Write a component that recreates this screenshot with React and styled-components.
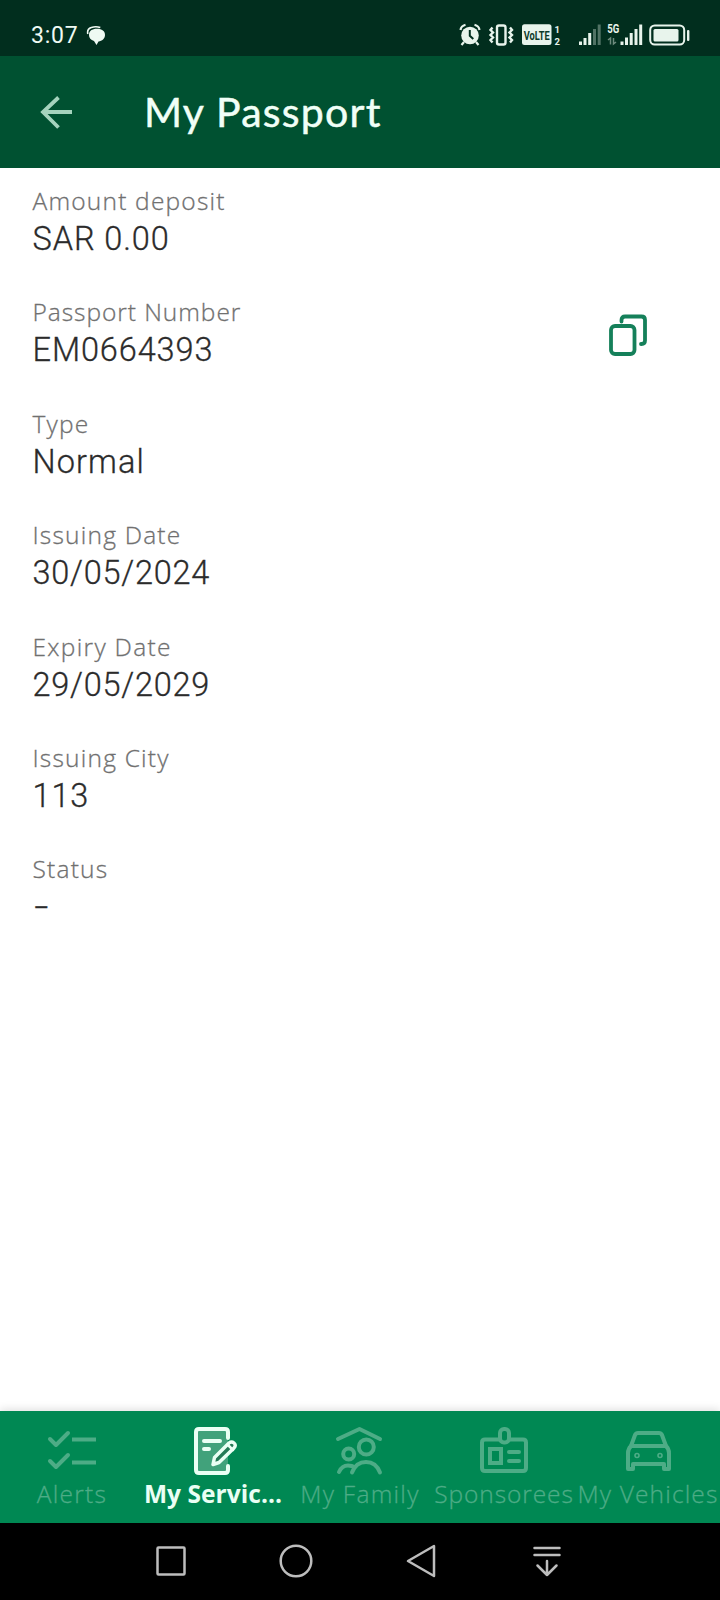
import React from 'react';
import styled, { createGlobalStyle } from 'styled-components';

const Global = createGlobalStyle`
  * { box-sizing: border-box; }
  body { margin: 0; background: #fff; font-family: Lato, 'Liberation Sans', sans-serif; }
`;

const Screen = styled.div`
  display: flex;
  flex-direction: column;
  width: 720px;
  height: 1600px;
  overflow: hidden;
  background: #fff;
`;

const StatusBar = styled.div`
  display: flex;
  align-items: flex-start;
  height: 56px;
  padding: 20px 30px 0 31px;
  background: #012e1e;
  color: #effaf3;
`;

const Clock = styled.span`
  width: 55px;
  padding-top: 2px;
  font: 400 23px/28px Roboto, sans-serif;
  letter-spacing: 0.8px;
`;

const StatusIcons = styled.svg`
  margin-left: auto;
`;

const Header = styled.header`
  display: flex;
  align-items: center;
  height: 112px;
  padding-left: 38px;
  background: #005131;
`;

const Title = styled.h1`
  margin: 0 0 0 68px;
  color: #f1fff7;
  font-size: 41px;
  font-weight: 400;
  line-height: 50px;
  letter-spacing: 1.25px;
  -webkit-text-stroke: 0.5px #f1fff7;
`;

const Details = styled.main`
  flex: 1;
  padding: 16px 32px 0 32.5px;
`;

const Field = styled.div`
  display: flex;
  justify-content: space-between;
  height: 111.4px;
  padding-right: 40px;
`;

const Label = styled.div`
  margin-bottom: 2px;
  color: #707070;
  font: 300 24.5px/33px 'Open Sans', sans-serif;
  letter-spacing: ${(p) => p.$track || 1.2}px;
  -webkit-text-stroke: 0.3px #707070;
`;

const Value = styled.div`
  color: #2b2b2b;
  font: 300 32.5px/40px Roboto, sans-serif;
  letter-spacing: ${(p) => p.$track || 0.9}px;
  -webkit-text-stroke: 0.3px #2b2b2b;
`;

const EmptyValue = styled(Value)`
  padding-left: 1px;
  font-size: 24px;
  font-weight: 400;
  line-height: 42px;
`;

const CopyButton = styled.button`
  align-self: flex-start;
  margin-top: 17.6px;
  padding: 0;
  border: 0;
  background: none;
  line-height: 0;
`;

const TabBar = styled.nav`
  display: grid;
  grid-template-columns: repeat(5, 144px);
  height: 112px;
  background: #008853;
  box-shadow: 0 -2px 8px rgba(0, 0, 0, 0.12);
`;

const Tab = styled.div`
  display: flex;
  flex-direction: column;
  align-items: center;
  padding-top: 15.5px;
  color: ${(p) => (p.$active ? '#eafff4' : '#4dac86')};
`;

const TabIcon = styled.svg`
  width: 50px;
  height: 50px;
  margin-bottom: 2px;
`;

const TabLabel = styled.span`
  padding-right: ${(p) => (p.$active ? 6 : 0)}px;
  font: ${(p) => (p.$active ? 700 : 300)} 24.5px/32px 'Open Sans', sans-serif;
  letter-spacing: ${(p) => p.$track}px;
  -webkit-text-stroke: ${(p) => (p.$active ? 0 : 0.3)}px currentColor;
  white-space: nowrap;
`;

const SystemBar = styled.div`
  display: flex;
  gap: 89.6px;
  height: 77.5px;
  padding: 20.5px 0 0 152.5px;
  background: #000;
`;

const SystemIcon = styled.svg`
  width: 36px;
  height: 36px;
`;

const fields = [
  { label: 'Amount deposit', value: 'SAR 0.00' },
  { label: 'Passport Number', value: 'EM0664393', copy: true, labelTrack: 0.95 },
  { label: 'Type', value: 'Normal', track: 1.1 },
  { label: 'Issuing Date', value: '30/05/2024', track: 0.75 },
  { label: 'Expiry Date', value: '29/05/2029', labelTrack: 1.3, track: 0.75 },
  { label: 'Issuing City', value: '113' },
  { label: 'Status', value: '' },
];

const icons = {
  alerts: (
    <g strokeWidth="4">
      <path d="M3 13l6 6L21 7M3 35l6 6 12-12" />
      <path d="M27 13.500h20M27 36.500h20" strokeLinecap="square" />
    </g>
  ),
  services: (
    <g>
      <path d="M37 12V6q0-3-3-3H8Q5 3 5 6v38q0 3 3 3h26q3 0 3-3v-4" fill="#41a27b" strokeWidth="4" />
      <path d="M13 15h16M13 23h5" strokeWidth="4" />
      <path d="M22 38.500l1.500-7L38 17q2.500-2 5 0t0 5L28 36.500z" fill="#247a56" strokeWidth="3.500" />
      <path d="M37 19l5 5" strokeWidth="2.500" />
    </g>
  ),
  family: (
    <g strokeWidth="4">
      <path d="M3 13L24.500 3 45 13" />
      <circle cx="13.700" cy="28" r="5.500" />
      <circle cx="31.300" cy="21" r="7.500" />
      <path d="M4 46q3-6.500 9-6.500 4 0 7 2M17 46.500q4-10.500 14-10.500t14 10.500" />
    </g>
  ),
  sponsorees: (
    <g strokeWidth="4">
      <path d="M20 13.500H6q-3 0-3 3V42q0 3 3 3h38q3 0 3-3V16.500q0-3-3-3H31" />
      <rect x="21" y="3" width="9" height="13.500" rx="4" />
      <path d="M11 23h11v14H11z" strokeLinejoin="miter" />
      <path d="M30 26h10M30 35h10" />
    </g>
  ),
  vehicles: (
    <g strokeWidth="4">
      <path d="M8 20l4-11q1-2 3-2h21q2 0 3 2l4 11" />
      <path d="M8 20h35q3 3 3 7v16h-5v-5H10v5H5V27q0-4 3-7z" />
      <circle cx="14" cy="29.500" r="0.800" />
      <circle cx="37" cy="29.500" r="0.800" />
    </g>
  ),
};

const tabs = [
  { icon: 'alerts', label: 'Alerts', track: 1.3 },
  { icon: 'services', label: 'My Servic...', active: true, track: 0.05 },
  { icon: 'family', label: 'My Family', track: 1.25 },
  { icon: 'sponsorees', label: 'Sponsorees', track: 0.9 },
  { icon: 'vehicles', label: 'My Vehicles', track: 1.15 },
];

// x position and height of each bar, weakest first
const simOne = [[579, 3.5], [583.5, 7], [588.2, 12], [593, 16], [597.7, 20.5]];
const simTwo = [[620.5, 3.5], [625, 7.5], [629.7, 12], [634.5, 16], [639.2, 20.5]];

const ChatIcon = () => (
  <svg width="20" height="28" viewBox="86 20 20 28">
    <path d="M87.800 34q-1-5 3.500-6.500 4.500-1.500 9 0" fill="none" stroke="#effaf3" strokeWidth="1.600" />
    <path d="M97 28.800c5 0 8 2.300 8 6.200 0 3.700-3 6-6.500 6.400L96.500 45 94 41c-3.300-1-5-3-5-6 0-4 3-6.200 8-6.200z" fill="#effaf3" />
  </svg>
);

const StatusGlyphs = () => (
  <StatusIcons width="240" height="30" viewBox="450 20 240 30" fill="#e8f4ec">
    <circle cx="470" cy="35.500" r="8.800" />
    <path d="M460.500 30q.5-4 5-5.200M479.500 30q-.5-4-5-5.200M464 42l-2.500 3M476 42l2.500 3" fill="none" stroke="#e8f4ec" strokeWidth="2.200" />
    <path d="M469.800 30v5.800l3.500 3.200" fill="none" stroke="#012e1e" strokeWidth="2" />
    <g fill="none" stroke="#e8f4ec" strokeWidth="2.400">
      <rect x="497" y="25.500" width="8.500" height="19" rx="2" />
      <path d="M492.500 27.500l-2 2.500 2.500 2.500-2.500 2.500 2.500 2.500-2.500 2.500 2 2.500M510 27.500l2 2.500-2.500 2.500 2.500 2.500-2.500 2.500 2.500 2.500-2 2.500" />
    </g>
    <rect x="522" y="24.300" width="29.500" height="20.700" rx="2.500" />
    <g fontFamily="Roboto, sans-serif" fontWeight="700">
      <text x="523.700" y="39.500" fontSize="13" fill="#0d3a28" textLength="26" lengthAdjust="spacingAndGlyphs">VoLTE</text>
      <text x="554.500" y="32.500" fontSize="9.500">1</text>
      <text x="554.500" y="44.800" fontSize="9.500">2</text>
      <text x="607.300" y="33.300" fontSize="12.500" textLength="12" lengthAdjust="spacingAndGlyphs">5G</text>
    </g>
    {simOne.map(([x, h], i) => (
      <rect key={x} x={x} y={45 - h} width="3" height={h} opacity={i > 2 ? 0.35 : 1} />
    ))}
    {simTwo.map(([x, h]) => (
      <rect key={x} x={x} y={45 - h} width="3" height={h} />
    ))}
    <path d="M608 40l2.500-2v6.500M613.500 38v6l2.500-2" fill="none" stroke="#6d8a7d" strokeWidth="1.500" />
    <rect x="650.200" y="25.500" width="34" height="19" rx="4.500" fill="none" stroke="#e8f4ec" strokeWidth="2" />
    <rect x="653.500" y="29" width="25" height="12.500" rx="1.500" />
    <rect x="687" y="30" width="2.400" height="11" rx="1" />
  </StatusIcons>
);

const CopyIcon = () => (
  <svg width="40" height="44" viewBox="0 0 40 44" fill="none" stroke="#15805a" strokeWidth="3.800" strokeLinecap="round">
    <rect x="3" y="13" width="23.500" height="28" rx="4" />
    <path d="M13.500 8.500V7q0-3.500 3.500-3.500h16.500q3.500 0 3.500 3.500v20.500q0 3.500-3.500 3.500H33" />
  </svg>
);

export default function App() {
  return (
    <Screen>
      <Global />
      <StatusBar>
        <Clock>3:07</Clock>
        <ChatIcon />
        <StatusGlyphs />
      </StatusBar>
      <Header>
        <svg width="38" height="40" viewBox="0 0 38 40" fill="none" stroke="#a5d3bd" strokeWidth="3.800">
          <path d="M34 20H5M20.500 5.500L5 20l15.500 15.500" />
        </svg>
        <Title>My Passport</Title>
      </Header>
      <Details>
        {fields.map((f) => (
          <Field key={f.label}>
            <div>
              <Label $track={f.labelTrack}>{f.label}</Label>
              {f.value ? <Value $track={f.track}>{f.value}</Value> : <EmptyValue>–</EmptyValue>}
            </div>
            {f.copy && (
              <CopyButton aria-label="Copy">
                <CopyIcon />
              </CopyButton>
            )}
          </Field>
        ))}
      </Details>
      <TabBar>
        {tabs.map((t) => (
          <Tab key={t.label} $active={t.active}>
            <TabIcon viewBox="0 0 50 50" fill="none" stroke="currentColor" strokeLinecap="round" strokeLinejoin="round">
              {icons[t.icon]}
            </TabIcon>
            <TabLabel $active={t.active} $track={t.track}>{t.label}</TabLabel>
          </Tab>
        ))}
      </TabBar>
      <SystemBar>
        {[
          <rect key="recent" x="4.500" y="4.500" width="27" height="27" rx="1" />,
          <circle key="home" cx="18" cy="18" r="15.300" />,
          <path key="back" d="M30 3v30L4 18z" />,
          <path key="hide" d="M5.500 5h25M5.500 12h25M18 18v14M8.500 22.500L18 32l9.500-9.500" />,
        ].map((shape) => (
          <SystemIcon key={shape.key} viewBox="0 0 36 36" fill="none" stroke="#bdbdbd" strokeWidth="2.500" strokeLinecap="round" strokeLinejoin="round">
            {shape}
          </SystemIcon>
        ))}
      </SystemBar>
    </Screen>
  );
}
